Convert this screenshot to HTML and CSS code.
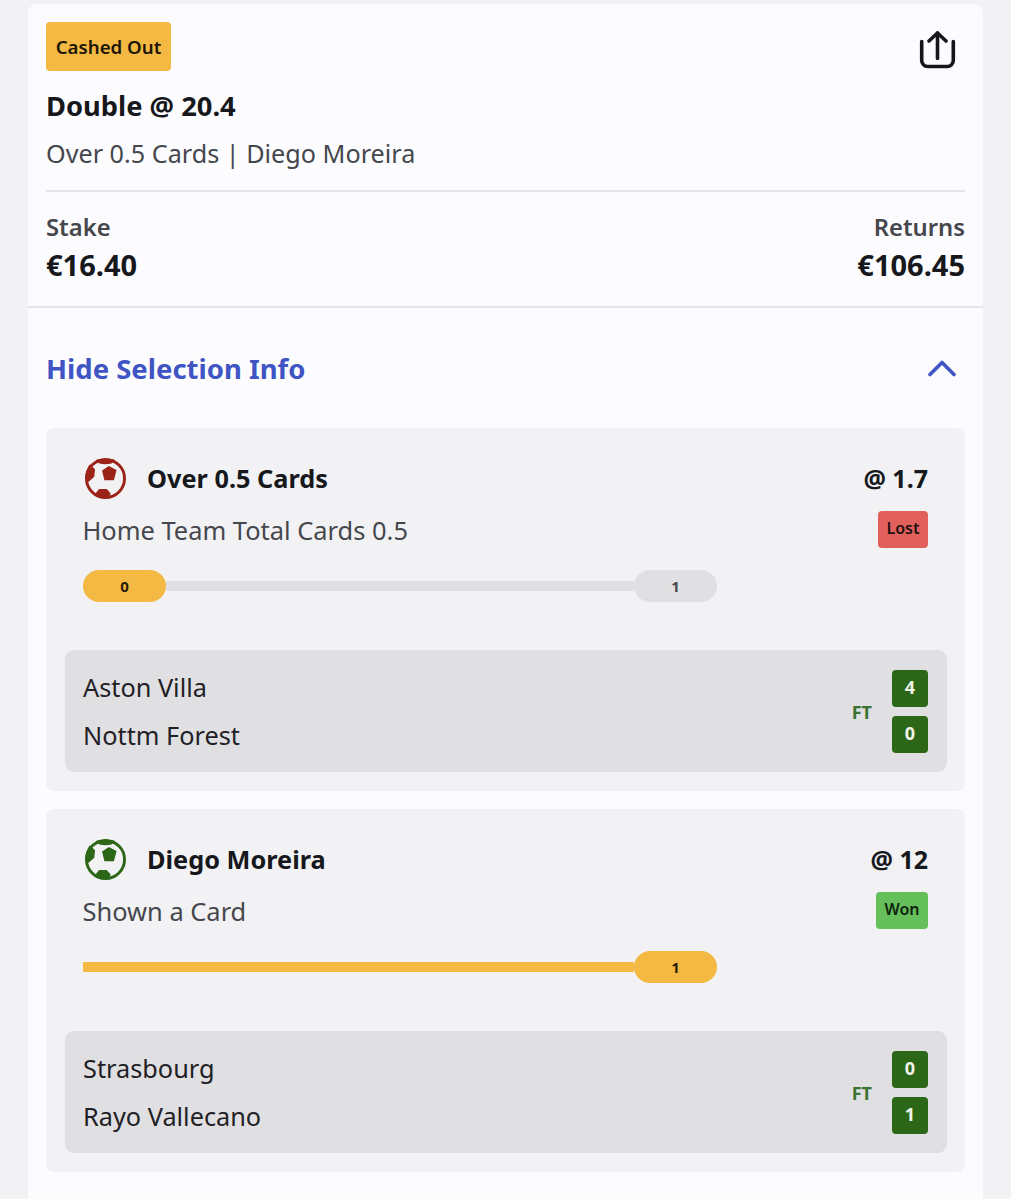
FILE: index.html
```html
<!DOCTYPE html>
<html>
<head>
	<meta charset="utf-8"/>
	<title>Bet receipt</title>
	<link rel="stylesheet" href="styles.css">
</head>
<body>
	<div class="card">
		<div class="summary">
			<div class="summary_top">
				<span class="badge cashed">Cashed Out</span>
				<svg class="share" viewBox="0 0 38 38" fill="none" stroke="#14161a" stroke-width="3.600" stroke-linecap="round" stroke-linejoin="round">
					<path d="M18.500 27.500V2"/>
					<path d="M10 10l8.500-8 8.500 8"/>
					<path d="M2.700 10.500V29.500a6 6 0 0 0 6 6h19.600a6 6 0 0 0 6-6V10.500"/>
				</svg>
			</div>
			<div class="title">Double @ 20.4</div>
			<div class="sub">Over 0.5 Cards | Diego Moreira</div>
			<div class="money">
				<div>
					<div class="money_label">Stake</div>
					<div class="money_value">€16.40</div>
				</div>
				<div class="right">
					<div class="money_label">Returns</div>
					<div class="money_value">€106.45</div>
				</div>
			</div>
		</div>

		<div class="toggle">
			<span>Hide Selection Info</span>
			<svg class="chevron" viewBox="0 0 30 18" fill="none" stroke="#3f55c4" stroke-width="3.600" stroke-linecap="round" stroke-linejoin="round">
				<path d="M3 15.500L15 3.500l12 12"/>
			</svg>
		</div>

		<div class="selection">
			<div class="sel_head">
				<svg class="ball lost_ball" viewBox="0 0 42 42">
					<circle class="ring" cx="21" cy="21" r="19.500"/>
					<path d="M12 2.500Q21 .5 30 2.500L27 4.800Q21 6.300 15 4.800z"/>
					<path d="M24.500 9L31.500 12.700 29 22H20.500L18.300 13.200z"/>
					<path d="M5 7.500L9.500 11.700 8.800 18.800 3.500 23.500 1 20Q1.500 13 5 7.500z"/>
					<path d="M14.800 32.500H22L25.500 36.500 24 40Q18 41 12 39L11.500 36.500z"/>
				</svg>
				<span class="sel_name">Over 0.5 Cards</span>
				<span class="odds">@ 1.7</span>
			</div>
			<div class="sel_row">
				<span class="sel_market">Home Team Total Cards 0.5</span>
				<span class="badge small lost">Lost</span>
			</div>
			<div class="progress">
				<div class="pill yellow">0</div>
				<div class="track"></div>
				<div class="pill grey">1</div>
			</div>
			<div class="match">
				<div class="teams">
					<div>Aston Villa</div>
					<div>Nottm Forest</div>
				</div>
				<span class="ft">FT</span>
				<div class="scores">
					<div class="score">4</div>
					<div class="score">0</div>
				</div>
			</div>
		</div>

		<div class="selection">
			<div class="sel_head">
				<svg class="ball won_ball" viewBox="0 0 42 42">
					<circle class="ring" cx="21" cy="21" r="19.500"/>
					<path d="M12 2.500Q21 .5 30 2.500L27 4.800Q21 6.300 15 4.800z"/>
					<path d="M24.500 9L31.500 12.700 29 22H20.500L18.300 13.200z"/>
					<path d="M5 7.500L9.500 11.700 8.800 18.800 3.500 23.500 1 20Q1.500 13 5 7.500z"/>
					<path d="M14.800 32.500H22L25.500 36.500 24 40Q18 41 12 39L11.500 36.500z"/>
				</svg>
				<span class="sel_name">Diego Moreira</span>
				<span class="odds">@ 12</span>
			</div>
			<div class="sel_row">
				<span class="sel_market">Shown a Card</span>
				<span class="badge small won">Won</span>
			</div>
			<div class="progress">
				<div class="track full"></div>
				<div class="pill yellow">1</div>
			</div>
			<div class="match">
				<div class="teams">
					<div>Strasbourg</div>
					<div>Rayo Vallecano</div>
				</div>
				<span class="ft">FT</span>
				<div class="scores">
					<div class="score">0</div>
					<div class="score">1</div>
				</div>
			</div>
		</div>
	</div>
</body>
</html>
```

FILE: styles.css
```css
html, body{
	height: 100%;
}
body{
	margin: 0;
	padding: 4px 28px 0 28px;
	box-sizing: border-box;
	background: #f2f2f5;
	font-family: "Noto Sans", sans-serif;
	color: #16181c;
	overflow: hidden;
}
.card{
	background: #fcfcfe;
	border-radius: 9px 9px 0 0;
	padding-bottom: 40px;
}

/* top part */
.summary{
	padding: 18px 18px 21px 18px;
	border-bottom: 2px solid #e6e6e9;
}
.summary_top{
	display: flex;
	justify-content: space-between;
	align-items: flex-start;
}
.badge{
	display: inline-flex;
	align-items: center;
	justify-content: center;
	border-radius: 4px;
	font-weight: 600;
}
.cashed{
	width: 125px;
	height: 49px;
	background: #f4b942;
	font-size: 18.700px;
	color: #1d1608;
}
.share{
	width: 38px;
	height: 38px;
	margin: 9px 8px 0 0;
}
.title{
	margin-top: 15px;
	font-size: 27.300px;
	line-height: 40px;
	font-weight: 700;
}
.sub{
	margin-top: 7px;
	font-size: 25.200px;
	line-height: 40px;
	color: #45474d;
	padding-bottom: 17px;
	border-bottom: 2px solid #e6e6e9;
}
.money{
	display: flex;
	justify-content: space-between;
	margin-top: 17px;
}
.right{
	text-align: right;
}
.money_label{
	font-size: 23.800px;
	line-height: 36px;
	font-weight: 600;
	color: #45474d;
}
.money_value{
	font-size: 29px;
	line-height: 40px;
	font-weight: 700;
}

/* toggle */
.toggle{
	display: flex;
	justify-content: space-between;
	align-items: center;
	height: 120px;
	padding: 0 26px 0 18px;
	font-size: 27.500px;
	font-weight: 700;
	color: #3f55c4;
}
.chevron{
	width: 30px;
	height: 18px;
}

/* selections */
.selection{
	margin: 0 18px 18px 18px;
	padding: 18px;
	height: 363px;
	box-sizing: border-box;
	background: #f2f2f5;
	border-radius: 8px;
}
.sel_head{
	display: flex;
	align-items: center;
	height: 46px;
	margin-top: 9px;
	padding: 0 19px 0 19px;
}
.ball{
	width: 41px;
	height: 41px;
	margin: 0 21px 0 2px;
}
.ring{
	fill: none;
	stroke-width: 3;
}
.ball path{
	stroke-width: 1.500;
	stroke-linejoin: round;
}
.lost_ball path{
	fill: #9c2318;
	stroke: #9c2318;
}
.lost_ball .ring{
	stroke: #9c2318;
}
.won_ball path{
	fill: #2c6717;
	stroke: #2c6717;
}
.won_ball .ring{
	stroke: #2c6717;
}
.sel_name{
	flex: 1;
	font-size: 25.300px;
	font-weight: 700;
}
.odds{
	font-size: 25px;
	font-weight: 700;
}
.sel_row{
	display: flex;
	justify-content: space-between;
	align-items: center;
	height: 37px;
	margin-top: 10px;
	padding: 0 19px 0 18.500px;
}
.sel_market{
	font-size: 25.450px;
	color: #45474d;
}
.small{
	height: 37px;
	box-sizing: border-box;
	padding: 0 8.500px 3px 8.500px;
	font-size: 16px;
	color: #1d1010;
}
.lost{
	background: #e2605c;
}
.won{
	background: #65bf5b;
	color: #10240c;
}
.progress{
	display: flex;
	align-items: center;
	width: 634px;
	margin: 22px 0 0 19px;
}
.pill{
	width: 83px;
	height: 32px;
	border-radius: 16px;
	display: flex;
	align-items: center;
	justify-content: center;
	font-size: 15px;
	font-weight: 700;
}
.yellow{
	background: #f4b942;
	color: #2a1c05;
}
.grey{
	background: #e0e0e3;
	color: #45474d;
}
.track{
	flex: 1;
	height: 10px;
	background: #e0e0e3;
}
.track.full{
	background: #f4b942;
}
.match{
	display: flex;
	align-items: center;
	height: 122px;
	margin: 48px 0 0 1px;
	box-sizing: border-box;
	padding: 0 19px 0 18px;
	background: #e0e0e3;
	border-radius: 9px;
}
.teams{
	flex: 1;
	font-size: 25.300px;
	line-height: 48px;
	color: #1f2125;
}
.ft{
	font-size: 18px;
	font-weight: 700;
	color: #3c7233;
	margin: 2px 20px 0 0;
}
.scores{
	display: flex;
	flex-direction: column;
	gap: 9px;
	margin-top: 1px;
}
.score{
	width: 36px;
	height: 37px;
	box-sizing: border-box;
	padding-bottom: 4px;
	display: flex;
	align-items: center;
	justify-content: center;
	background: #2c6717;
	border-radius: 4px;
	color: #f0f4ea;
	font-size: 18px;
	font-weight: 700;
}
```
